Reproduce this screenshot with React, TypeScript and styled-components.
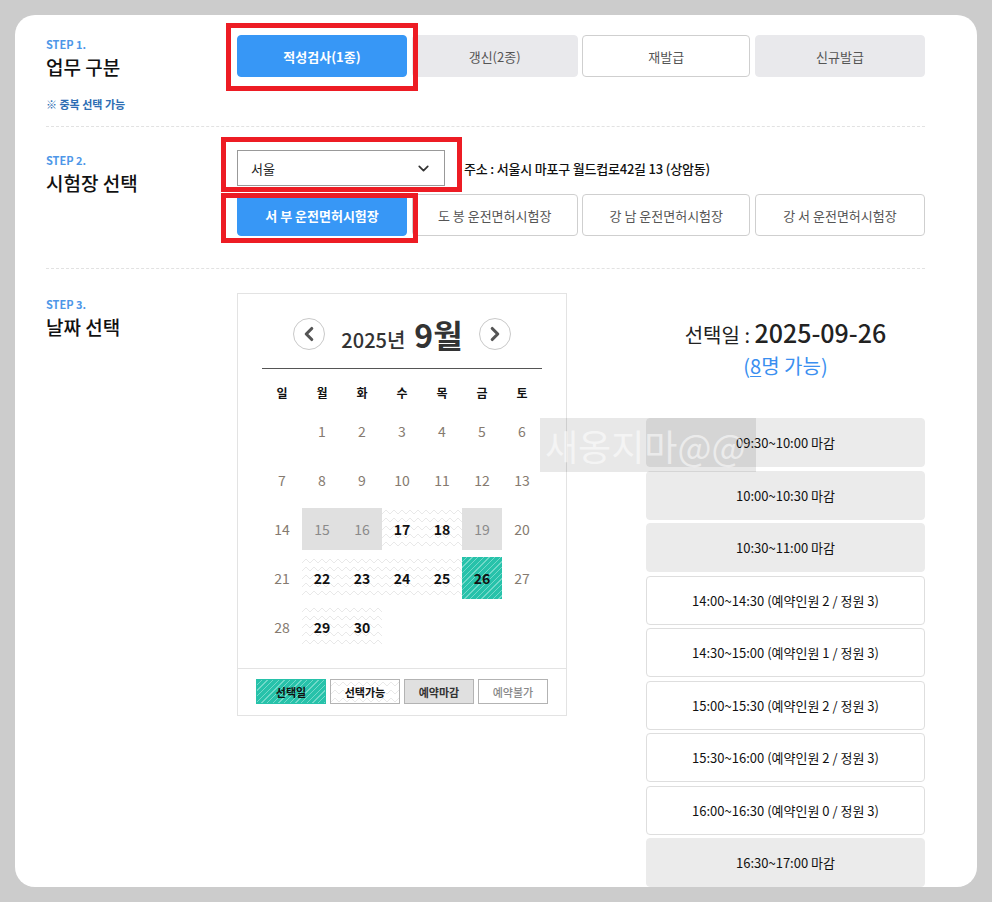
import React from "react"
import styled, { createGlobalStyle, css } from "styled-components"
import { ChevronLeft, ChevronRight, ChevronDown } from "lucide-react"

const GlobalStyle = createGlobalStyle`
  html, body {
    margin: 0;
    padding: 0;
    background: #cccccc;
  }
  body {
    font-family: "Noto Sans CJK KR", "Noto Sans", sans-serif;
    color: #222;
  }
  * {
    box-sizing: border-box;
  }
`

const zigzag = `url("data:image/svg+xml,%3Csvg xmlns='http://www.w3.org/2000/svg' width='8' height='8'%3E%3Cpolyline points='0,6 4,2 8,6' fill='none' stroke='%23e9e9e9' stroke-width='1'/%3E%3C/svg%3E")`

const teal = css`
  background: repeating-linear-gradient(135deg, #27c2aa 0 3px, #72d9c9 3px 4px);
`

type Tone = "primary" | "muted" | "outline"

const works: { label: string; tone: Tone }[] = [
  { label: "적성검사(1종)", tone: "primary" },
  { label: "갱신(2종)", tone: "muted" },
  { label: "재발급", tone: "outline" },
  { label: "신규발급", tone: "muted" },
]

const stations: { label: string; tone: Tone }[] = [
  { label: "서 부 운전면허시험장", tone: "primary" },
  { label: "도 봉 운전면허시험장", tone: "outline" },
  { label: "강 남 운전면허시험장", tone: "outline" },
  { label: "강 서 운전면허시험장", tone: "outline" },
]

type DayKind = "off" | "closed" | "open" | "selected" | "empty"

const days: { n?: number; kind: DayKind }[] = [
  { kind: "empty" },
  ...[1, 2, 3, 4, 5, 6, 7, 8, 9, 10, 11, 12, 13, 14].map((n) => ({ n, kind: "off" as DayKind })),
  { n: 15, kind: "closed" },
  { n: 16, kind: "closed" },
  { n: 17, kind: "open" },
  { n: 18, kind: "open" },
  { n: 19, kind: "closed" },
  { n: 20, kind: "off" },
  { n: 21, kind: "off" },
  { n: 22, kind: "open" },
  { n: 23, kind: "open" },
  { n: 24, kind: "open" },
  { n: 25, kind: "open" },
  { n: 26, kind: "selected" },
  { n: 27, kind: "off" },
  { n: 28, kind: "off" },
  { n: 29, kind: "open" },
  { n: 30, kind: "open" },
]

const slots: { time: string; info: string; closed: boolean }[] = [
  { time: "09:30~10:00", info: "마감", closed: true },
  { time: "10:00~10:30", info: "마감", closed: true },
  { time: "10:30~11:00", info: "마감", closed: true },
  { time: "14:00~14:30", info: "(예약인원 2 / 정원 3)", closed: false },
  { time: "14:30~15:00", info: "(예약인원 1 / 정원 3)", closed: false },
  { time: "15:00~15:30", info: "(예약인원 2 / 정원 3)", closed: false },
  { time: "15:30~16:00", info: "(예약인원 2 / 정원 3)", closed: false },
  { time: "16:00~16:30", info: "(예약인원 0 / 정원 3)", closed: false },
  { time: "16:30~17:00", info: "마감", closed: true },
]

const weekdays = ["일", "월", "화", "수", "목", "금", "토"]

const App: React.FunctionComponent = () => {
  return (
    <>
      <GlobalStyle />
      <Page>
        <Card>
          <Section $pad="0 0 14px">
            <Label>
              <StepNo>STEP 1.</StepNo>
              <StepTitle>업무 구분</StepTitle>
              <Note>※ 중복 선택 가능</Note>
            </Label>
            <ButtonRow>
              {works.map((w) => (
                <OptionButton key={w.label} $tone={w.tone}>
                  {w.label}
                </OptionButton>
              ))}
            </ButtonRow>
          </Section>

          <Section $pad="23px 0 32px">
            <Label $top={3}>
              <StepNo>STEP 2.</StepNo>
              <StepTitle>시험장 선택</StepTitle>
            </Label>
            <Stack>
              <SelectRow>
                <Select>
                  서울
                  <ChevronDown size={17} strokeWidth={2.4} color="#333" />
                </Select>
                <Address>주소 : 서울시 마포구 월드컵로42길 13 (상암동)</Address>
              </SelectRow>
              <ButtonRow>
                {stations.map((s) => (
                  <OptionButton key={s.label} $tone={s.tone}>
                    {s.label}
                  </OptionButton>
                ))}
              </ButtonRow>
            </Stack>
          </Section>

          <Section $pad="24px 0 0" $last>
            <Label $top={4}>
              <StepNo>STEP 3.</StepNo>
              <StepTitle>날짜 선택</StepTitle>
            </Label>
            <DateArea>
              <Calendar>
                <CalHead>
                  <NavCircle>
                    <ChevronLeft size={22} strokeWidth={3.4} color="#555" />
                  </NavCircle>
                  <MonthTitle>
                    <YearText>2025년</YearText>
                    <MonthText>9월</MonthText>
                  </MonthTitle>
                  <NavCircle>
                    <ChevronRight size={22} strokeWidth={3.4} color="#555" />
                  </NavCircle>
                </CalHead>
                <WeekRow>
                  {weekdays.map((d) => (
                    <WeekDay key={d}>{d}</WeekDay>
                  ))}
                </WeekRow>
                <DayGrid>
                  {days.map((d, i) => (
                    <DayCell key={i} $kind={d.kind}>
                      {d.n}
                    </DayCell>
                  ))}
                </DayGrid>
                <Legend>
                  <LegendItem $kind="selected">선택일</LegendItem>
                  <LegendItem $kind="open">선택가능</LegendItem>
                  <LegendItem $kind="closed">예약마감</LegendItem>
                  <LegendItem $kind="off">예약불가</LegendItem>
                </Legend>
              </Calendar>

              <SlotPanel>
                <Picked>
                  선택일 : <PickedDate>2025-09-26</PickedDate>
                </Picked>
                <Available>
                  (<Count>8</Count>명 가능)
                </Available>
                <SlotList>
                  {slots.map((s) => (
                    <Slot key={s.time} $closed={s.closed}>
                      {s.time} {s.info}
                    </Slot>
                  ))}
                </SlotList>
              </SlotPanel>
            </DateArea>
          </Section>

          <Frame style={{ left: 211, top: 8, width: 192, height: 68 }} />
          <Frame style={{ left: 206, top: 122, width: 241, height: 55 }} />
          <Frame style={{ left: 206, top: 178, width: 197, height: 50 }} />

          <Watermark>새옹지마@@</Watermark>
        </Card>
      </Page>
    </>
  )
}

const Page = styled.div`
  padding: 15px;
`

const Card = styled.div`
  position: relative;
  width: 962px;
  height: 872px;
  overflow: hidden;
  background: #fff;
  border-radius: 20px;
  padding: 20px 52px 0 31px;
`

const Section = styled.section<{ $pad: string; $last?: boolean }>`
  display: grid;
  grid-template-columns: 191px 688px;
  padding: ${(p) => p.$pad};
  border-bottom: ${(p) => (p.$last ? "none" : "1px dashed #e2e2e2")};
`

const Label = styled.div<{ $top?: number }>`
  display: flex;
  flex-direction: column;
  padding-top: ${(p) => p.$top ?? 2}px;
`

const StepNo = styled.div`
  font-size: 11px;
  font-weight: 700;
  line-height: 14px;
  color: #4d97e8;
`

const StepTitle = styled.div`
  font-size: 19px;
  font-weight: 500;
  line-height: 26px;
  color: #111;
  margin-top: 3px;
`

const Note = styled.div`
  font-size: 11px;
  font-weight: 700;
  color: #2c6db3;
  margin-top: 16px;
`

const ButtonRow = styled.div`
  display: grid;
  grid-template-columns: 170px 166px 168px 170px;
  column-gap: 4px;
  justify-content: space-between;
`

const OptionButton = styled.button<{ $tone: Tone }>`
  height: 42px;
  border-radius: 4px;
  font-family: inherit;
  font-size: 13px;
  cursor: pointer;
  ${(p) =>
    p.$tone === "primary"
      ? css`
          background: #3797f6;
          border: 1px solid #3797f6;
          color: #fff;
          font-weight: 700;
        `
      : p.$tone === "muted"
        ? css`
            background: #e9e9ec;
            border: 1px solid #e9e9ec;
            color: #555;
          `
        : css`
            background: #fff;
            border: 1px solid #cfcfcf;
            color: #555;
          `}
`

const Stack = styled.div`
  display: flex;
  flex-direction: column;
  gap: 8px;
`

const SelectRow = styled.div`
  display: flex;
  align-items: center;
  gap: 19px;
`

const Select = styled.div`
  width: 208px;
  height: 36px;
  border: 1px solid #999;
  display: flex;
  align-items: center;
  justify-content: space-between;
  padding: 0 12px 0 13px;
  font-size: 13px;
  color: #222;
`

const Address = styled.div`
  font-size: 13px;
  font-weight: 500;
  color: #111;
  letter-spacing: -0.2px;
`

const DateArea = styled.div`
  display: flex;
  gap: 79px;
  align-items: flex-start;
`

const Calendar = styled.div`
  width: 330px;
  border: 1px solid #e3e3e3;
  display: flex;
  flex-direction: column;
`

const CalHead = styled.div`
  margin: 0 24px;
  height: 75px;
  padding-top: 5px;
  border-bottom: 1px solid #555;
  display: flex;
  align-items: center;
  justify-content: center;
  gap: 16px;
`

const NavCircle = styled.div`
  width: 32px;
  height: 32px;
  border-radius: 50%;
  border: 1px solid #c9c9c9;
  display: flex;
  align-items: center;
  justify-content: center;
`

const MonthTitle = styled.div`
  display: flex;
  align-items: baseline;
  gap: 9px;
  color: #333;
`

const YearText = styled.span`
  font-size: 20px;
  font-weight: 500;
`

const MonthText = styled.span`
  font-size: 32px;
  font-weight: 700;
`

const WeekRow = styled.div`
  display: grid;
  grid-template-columns: repeat(7, 40px);
  margin: 6px 24px 0;
  height: 34px;
  align-items: center;
`

const WeekDay = styled.div`
  text-align: center;
  font-size: 12px;
  font-weight: 700;
  color: #111;
`

const DayGrid = styled.div`
  display: grid;
  grid-template-columns: repeat(7, 40px);
  grid-auto-rows: 42px;
  row-gap: 7px;
  margin: 1px 24px 0;
  padding-bottom: 20px;
`

const dayLook = (kind: DayKind) => {
  switch (kind) {
    case "closed":
      return css`
        background: #e0e0e0;
        color: #8a8a8a;
      `
    case "open":
      return css`
        background-color: #fff;
        background-image: ${zigzag};
        color: #111;
        font-weight: 700;
      `
    case "selected":
      return css`
        ${teal}
        color: #111;
        font-weight: 700;
      `
    default:
      return css`
        color: #857a70;
      `
  }
}

const DayCell = styled.div<{ $kind: DayKind }>`
  display: flex;
  align-items: center;
  justify-content: center;
  font-size: 14px;
  ${(p) => dayLook(p.$kind)}
`

const Legend = styled.div`
  border-top: 1px solid #e3e3e3;
  display: flex;
  justify-content: center;
  gap: 4px;
  padding: 10px 0 11px;
`

const LegendItem = styled.div<{ $kind: DayKind }>`
  width: 70px;
  height: 25px;
  display: flex;
  align-items: center;
  justify-content: center;
  font-size: 11px;
  font-weight: 700;
  border: 1px solid #b3b3b3;
  ${(p) =>
    p.$kind === "selected"
      ? css`
          ${teal}
          border-color: #27c2aa;
          color: #111;
        `
      : p.$kind === "open"
        ? css`
            background-color: #fff;
            background-image: ${zigzag};
            color: #111;
          `
        : p.$kind === "closed"
          ? css`
              background: #e0e0e0;
              color: #333;
            `
          : css`
              background: #fff;
              color: #888;
              font-weight: 500;
            `}
`

const SlotPanel = styled.div`
  width: 279px;
  display: flex;
  flex-direction: column;
  align-items: center;
  padding-top: 23px;
`

const Picked = styled.div`
  font-size: 20px;
  color: #222;
  line-height: 32px;
`

const PickedDate = styled.span`
  font-size: 25px;
  font-weight: 500;
`

const Available = styled.div`
  font-size: 20px;
  color: #3a8ff0;
  line-height: 30px;
`

const Count = styled.span`
  text-decoration: underline;
  text-underline-offset: 2px;
  text-decoration-thickness: 1px;
`

const SlotList = styled.div`
  width: 100%;
  display: flex;
  flex-direction: column;
  gap: 3.5px;
  margin-top: 37px;
`

const Slot = styled.div<{ $closed: boolean }>`
  height: 49px;
  border-radius: 4px;
  display: flex;
  align-items: center;
  justify-content: center;
  font-size: 13px;
  color: #111;
  background: ${(p) => (p.$closed ? "#ebebeb" : "#fff")};
  border: 1px solid ${(p) => (p.$closed ? "#ebebeb" : "#dedede")};
`

const Frame = styled.div`
  position: absolute;
  border: 5px solid #ed1c24;
  pointer-events: none;
`

const Watermark = styled.div`
  position: absolute;
  left: 525px;
  top: 403px;
  width: 216px;
  height: 54px;
  background: rgba(0, 0, 0, 0.09);
  color: rgba(255, 255, 255, 0.55);
  font-size: 36px;
  line-height: 54px;
  padding-left: 5px;
  white-space: nowrap;
  overflow: hidden;
  pointer-events: none;
`

export default App
